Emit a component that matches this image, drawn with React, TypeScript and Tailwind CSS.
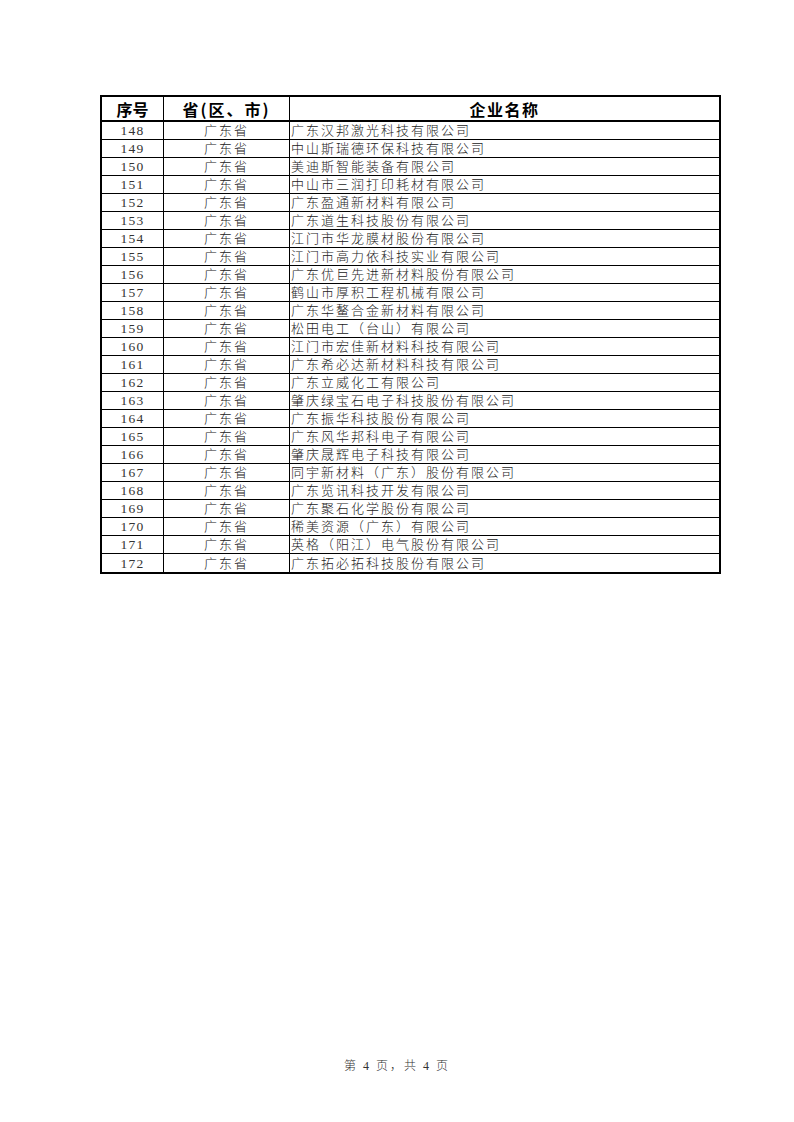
import React from "react";

const rows: [number, string][] = [
  [148, "广东汉邦激光科技有限公司"],
  [149, "中山斯瑞德环保科技有限公司"],
  [150, "美迪斯智能装备有限公司"],
  [151, "中山市三润打印耗材有限公司"],
  [152, "广东盈通新材料有限公司"],
  [153, "广东道生科技股份有限公司"],
  [154, "江门市华龙膜材股份有限公司"],
  [155, "江门市高力依科技实业有限公司"],
  [156, "广东优巨先进新材料股份有限公司"],
  [157, "鹤山市厚积工程机械有限公司"],
  [158, "广东华鳌合金新材料有限公司"],
  [159, "松田电工（台山）有限公司"],
  [160, "江门市宏佳新材料科技有限公司"],
  [161, "广东希必达新材料科技有限公司"],
  [162, "广东立威化工有限公司"],
  [163, "肇庆绿宝石电子科技股份有限公司"],
  [164, "广东振华科技股份有限公司"],
  [165, "广东风华邦科电子有限公司"],
  [166, "肇庆晟辉电子科技有限公司"],
  [167, "同宇新材料（广东）股份有限公司"],
  [168, "广东览讯科技开发有限公司"],
  [169, "广东聚石化学股份有限公司"],
  [170, "稀美资源（广东）有限公司"],
  [171, "英格（阳江）电气股份有限公司"],
  [172, "广东拓必拓科技股份有限公司"],
];

export default function App() {
  return (
    <div className="w-[794px] h-[1122px] bg-white text-[#222] font-['Liberation_Serif','Noto_Sans_CJK_SC',serif]">
      <div className="pt-[95px] pl-[100px]">
        <div className="w-[621px] border-2 border-black">
          <div className="grid grid-cols-[62px_126px_1fr] h-[25px] border-b-2 border-black font-['Noto_Sans_CJK_SC',sans-serif] font-bold text-[16px] leading-[22px] text-black">
            <div className="border-r border-black flex items-center justify-center">序号</div>
            <div className="border-r border-black flex items-center justify-center tracking-[2px]">省(区、市)</div>
            <div className="flex items-center justify-center tracking-[1.5px]">企业名称</div>
          </div>
          {rows.map(([n, name], i) => (
            <div
              key={n}
              className={
                "grid grid-cols-[62px_126px_1fr] h-[18px] " +
                (i < rows.length - 1 ? "border-b border-black" : "")
              }
            >
              <div className="border-r border-black flex items-center justify-center text-[13.5px] tracking-[1.2px] leading-[17px] text-[#333] font-normal">
                {n}
              </div>
              <div className="border-r border-black flex items-center justify-center text-[13px] tracking-[2px] leading-[17px] font-light">
                广东省
              </div>
              <div className="flex items-center pl-[1px] text-[13px] tracking-[2px] leading-[17px] font-light whitespace-nowrap">
                {name}
              </div>
            </div>
          ))}
        </div>
      </div>
      <div className="mt-[484px] h-[16px] leading-[16px] text-center text-[12px] tracking-[2px] text-[#333] font-light">
        第 4 页，共 4 页
      </div>
    </div>
  );
}
